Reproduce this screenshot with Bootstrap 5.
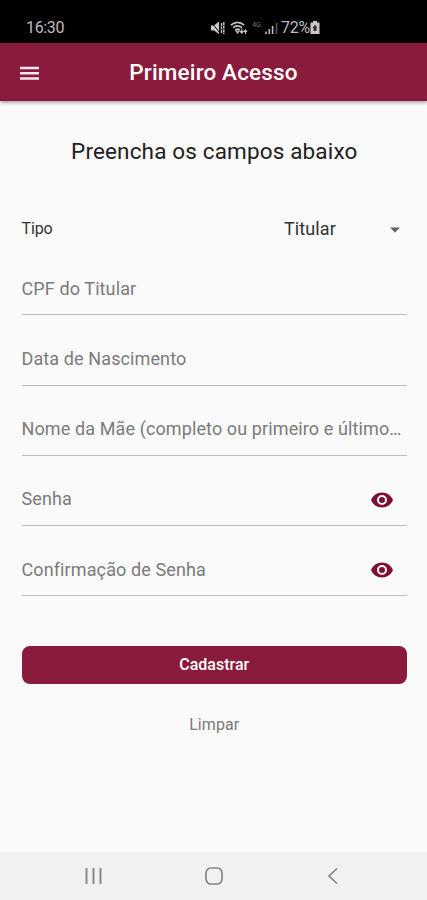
<!DOCTYPE html>
<html lang="pt-BR">
<head>
<meta charset="utf-8">
<meta name="viewport" content="width=device-width, initial-scale=1">
<title>Primeiro Acesso</title>
<link href="https://cdn.jsdelivr.net/npm/bootstrap@5.3.0/dist/css/bootstrap.min.css" rel="stylesheet">
<style>
:root { --wine: #8a1b3d; }
body { font-family: Roboto, "Liberation Sans", sans-serif; background: #fafafa; color: #212121; height: 900px; overflow: hidden; }
svg { display: block; flex: none; }
.status-bar { height: 43px; padding: 12px 107px 0 26px; background: #000; color: #bdbdbd; line-height: 32px; }
.clock { font-size: 16px; letter-spacing: -.35px; }
.battery-level { font-size: 16px; letter-spacing: -.2px; margin-left: 3px; }
.net-type { font-size: 7px; line-height: 8px; color: #777; margin: 0 0 6px 4px; }
.app-bar { height: 58px; background: var(--wine); box-shadow: 0 1px 4px rgba(0,0,0,.45); color: #fff; padding: 0 20px; }
.app-title { font-size: 22.5px; font-weight: 500; line-height: 58px; letter-spacing: .15px; }
.side-slot { width: 20px; }
.content-area { padding: 0 20px 0 21.5px; }
.intro { font-size: 22.5px; line-height: 30px; margin-top: 35px; letter-spacing: .15px; }
.type-row { height: 30px; margin-top: 48px; padding-right: 7px; color: #333; }
.type-label { font-size: 16px; letter-spacing: -.1px; }
.type-picker { width: 116px; font-size: 18px; letter-spacing: .1px; line-height: 26px; }
.type-picker svg { margin-top: 2px; }
.fields { margin-top: 1px; }
.field-row { height: 70.3px; padding-top: 28px; border-bottom: 1.5px solid #bcbcbc; }
.field-row .form-control { font-size: 18px; line-height: 26px; letter-spacing: .11px; height: 30px; background: transparent; color: #212121; }
.field-row .form-control::placeholder { color: #7b7b7b; opacity: 1; }
.eye-btn { padding: 0 13px 0 0; height: 32px; }
.btn-submit { height: 38px; margin-top: 50px; border-radius: 8px; background: var(--wine); color: #fff; font-size: 16px; font-weight: 500; line-height: 36px; }
.btn-clear { margin-top: 26px; height: 30px; color: #7b7b7b; font-size: 16px; line-height: 30px; letter-spacing: .1px; }
.nav-keys { height: 48px; background: #f1f1f1; color: #858585; }
</style>
<script src="https://cdn.jsdelivr.net/npm/bootstrap@5.3.0/dist/js/bootstrap.bundle.min.js"></script>
</head>
<body class="d-flex flex-column m-0">
<div class="status-bar d-flex justify-content-between">
  <span class="clock">16:30</span>
  <div class="d-flex align-items-center">
    <svg width="15" height="14" viewBox="0 0 15 14" fill="#c8c8c8"><path d="M0 4.500h3L8 .5v12.500L3 9.500H0z"/><path d="M0 1l9 11" stroke="#000" stroke-width="1"/><path d="M10.500 2v10M12.800 1v12" stroke="#c8c8c8" stroke-width="1.400" stroke-dasharray="3 .6"/></svg>
    <svg class="ms-1" width="18" height="14" viewBox="0 0 18 14" fill="none" stroke="#c0c0c0" stroke-width="1.700"><path d="M.8 4.200Q7.500-1.500 14.200 4.200M3 6.700q4.500-3.700 9 0M5.300 9q2.200-1.800 4.500 0"/><path d="M6 10h3l-1.500 2zM11.800 7.500v4M10 10l1.800 2 1.800-2M15.500 13V9M14 10.800l1.500-1.800 1.500 1.800" stroke-width="1.200"/></svg>
    <span class="net-type">4G</span>
    <svg class="ms-1" width="13" height="12" viewBox="0 0 13 12"><path d="M1 12V9.500M4.300 12V7M7.600 12V4" stroke="#bbb" stroke-width="1.600"/><path d="M11.500 12V1" stroke="#555" stroke-width="1.600"/></svg>
    <span class="battery-level">72%</span>
    <svg width="10" height="13" viewBox="0 0 10 13"><path d="M3 0h4v1.500h2.500V13H.5V1.500H3z" fill="#c8c8c8"/><path d="M5 3.500L2.500 7h5zM3.500 7h3v3h-3z" fill="#333"/></svg>
  </div>
</div>
<header class="app-bar d-flex align-items-center justify-content-between">
  <svg class="mt-1" width="20" height="16" viewBox="0 0 20 16" stroke="#f8e8ee" stroke-width="2.400"><path d="M0 2h19M0 7.200h19M0 12.500h19"/></svg>
  <h1 class="app-title m-0">Primeiro Acesso</h1>
  <span class="side-slot"></span>
</header>
<main class="content-area flex-grow-1 d-flex flex-column">
  <h2 class="intro text-center fw-normal mb-0">Preencha os campos abaixo</h2>
  <div class="type-row d-flex align-items-center justify-content-between">
    <span class="type-label">Tipo</span>
    <div class="type-picker d-flex align-items-center justify-content-between"><span>Titular</span><svg width="10" height="6" viewBox="0 0 10 6"><path d="M0 .5h10L5 5.500z" fill="#616161"/></svg></div>
  </div>
  <form class="fields">
    <div class="field-row"><input class="form-control border-0 rounded-0 shadow-none p-0" type="text" placeholder="CPF do Titular"></div>
    <div class="field-row"><input class="form-control border-0 rounded-0 shadow-none p-0" type="text" placeholder="Data de Nascimento"></div>
    <div class="field-row"><input class="form-control border-0 rounded-0 shadow-none p-0" type="text" placeholder="Nome da Mãe (completo ou primeiro e último…"></div>
    <div class="field-row d-flex"><input class="form-control border-0 rounded-0 shadow-none p-0" type="password" placeholder="Senha">
      <button class="btn border-0 eye-btn d-flex" type="button" aria-label="Mostrar senha"><svg width="24" height="32" viewBox="0 -4 24 32"><path d="M12 4.500C7 4.500 2.730 7.610 1 12c1.730 4.390 6 7.500 11 7.500s9.270-3.110 11-7.500c-1.730-4.390-6-7.500-11-7.500zM12 17a5 5 0 1 1 0-10 5 5 0 0 1 0 10zm0-8a3 3 0 1 0 0 6 3 3 0 0 0 0-6z" fill="#800d34"/></svg></button></div>
    <div class="field-row d-flex"><input class="form-control border-0 rounded-0 shadow-none p-0" type="password" placeholder="Confirmação de Senha">
      <button class="btn border-0 eye-btn d-flex" type="button" aria-label="Mostrar senha"><svg width="24" height="32" viewBox="0 -4 24 32"><path d="M12 4.500C7 4.500 2.730 7.610 1 12c1.730 4.390 6 7.500 11 7.500s9.270-3.110 11-7.500c-1.730-4.390-6-7.500-11-7.500zM12 17a5 5 0 1 1 0-10 5 5 0 0 1 0 10zm0-8a3 3 0 1 0 0 6 3 3 0 0 0 0-6z" fill="#800d34"/></svg></button></div>
    <button class="btn btn-submit border-0 w-100 p-0 d-block" type="button">Cadastrar</button>
    <button class="btn btn-clear border-0 w-100 p-0 d-block" type="reset">Limpar</button>
  </form>
</main>
<footer class="nav-keys d-flex align-items-center justify-content-between px-4">
  <svg class="ms-5" width="44" height="18" viewBox="0 0 44 18"><path d="M14.500 1v16M21.500 1v16M28.500 1v16" stroke="#858585" stroke-width="1.900"/></svg>
  <svg width="18" height="18" viewBox="0 0 18 18"><rect x="1" y="1" width="16" height="16" rx="5" fill="none" stroke="#858585" stroke-width="1.700"/></svg>
  <svg class="me-5" width="44" height="18" viewBox="0 0 44 18"><path d="M26 1.500L18 9l8 7.500" fill="none" stroke="#858585" stroke-width="1.700"/></svg>
</footer>
</body>
</html>
